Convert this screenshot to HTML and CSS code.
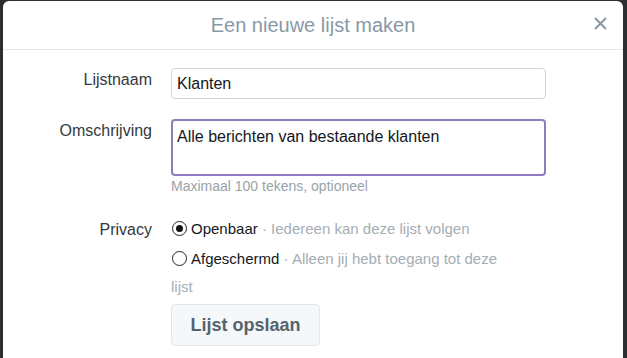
FILE: index.html
```html
<!DOCTYPE html>
<html lang="nl">
<head>
<meta charset="utf-8">
<title>Een nieuwe lijst maken</title>
<link rel="stylesheet" href="styles.css">
</head>
<body>
<div class="modal">
  <div class="modal-header">
    <h3 class="modal-title">Een nieuwe lijst maken</h3>
    <button class="close" aria-label="Sluiten">
      <svg width="13" height="13" viewBox="0 0 13 13"><path d="M1 1 L12 12 M12 1 L1 12" stroke="#8899a6" stroke-width="2" fill="none"/></svg>
    </button>
  </div>
  <form class="modal-body">
    <label class="label label-name">Lijstnaam</label>
    <div class="field"><div class="input">Klanten</div></div>

    <label class="label label-desc">Omschrijving</label>
    <div class="field">
      <div class="textarea">Alle berichten van bestaande klanten</div>
      <p class="hint">Maximaal 100 tekens, optioneel</p>
    </div>

    <label class="label label-privacy">Privacy</label>
    <div class="field options">
      <p class="option"><span class="radio checked"></span><span class="opt-name">Openbaar</span> <span class="muted">· Iedereen kan deze lijst volgen</span></p>
      <p class="option"><span class="radio"></span><span class="opt-name">Afgeschermd</span> <span class="muted">· Alleen jij hebt toegang tot deze</span> <span class="muted">lijst</span></p>
      <div class="actions"><button type="button" class="btn">Lijst opslaan</button></div>
    </div>
  </form>
</div>
</body>
</html>
```
FILE: styles.css
```css
html, body {
  margin: 0;
  padding: 0;
  height: 100%;
}
body {
  background: #2b2e30;
  font-family: "Liberation Sans", Arial, sans-serif;
  overflow: hidden;
}
.modal {
  box-sizing: border-box;
  margin: 1px 4px 0 3px;
  height: 357px;
  background: #fff;
  border-radius: 6px 6px 0 0;
}
.modal-header {
  position: relative;
  height: 48px;
  border-bottom: 1px solid #e1e8ed;
  display: flex;
  align-items: center;
  justify-content: center;
}
.modal-title {
  margin: 0;
  font-weight: normal;
  font-size: 20px;
  color: #8899a6;
  line-height: 24px;
}
.close {
  position: absolute;
  right: 16px;
  top: 16px;
  width: 13px;
  height: 13px;
  padding: 0;
  border: 0;
  background: none;
  display: block;
}
.close svg { display: block; }
.modal-body {
  display: grid;
  grid-template-columns: 149px 375px;
  column-gap: 19px;
  padding-top: 18px;
  margin: 0;
  color: #292f33;
}
.label {
  text-align: right;
  font-size: 16px;
  line-height: 20px;
  color: #333a40;
}
.label-name { padding-top: 2px; }
.label-desc { padding-top: 2px; margin-top: 20px; }
.label-privacy { margin-top: 25px; }
.field { min-width: 0; }
.input {
  box-sizing: border-box;
  height: 31px;
  border: 1px solid #ccd6dd;
  border-radius: 4px;
  padding: 5px 5px 0;
  font-size: 16px;
  line-height: 20px;
  color: #14171a;
}
.textarea {
  box-sizing: border-box;
  margin-top: 20px;
  height: 57px;
  border: 2px solid #8f7bbd;
  border-radius: 4px;
  padding: 6px 4px 0;
  font-size: 16px;
  line-height: 20px;
  color: #14171a;
}
.hint {
  margin: 1px 0 0;
  font-size: 14px;
  line-height: 18px;
  color: #99a3aa;
}
.options {
  padding-top: 20px;
  width: 335px;
  font-size: 15px;
  color: #14171a;
}
.option {
  margin: 0;
  line-height: 28px;
}
.option + .option { margin-top: 2px; }
.radio {
  display: inline-block;
  box-sizing: border-box;
  width: 15px;
  height: 15px;
  border: 1px solid #222;
  border-radius: 50%;
  vertical-align: -2px;
  margin: 0 4px 0 1px;
  position: relative;
  background: #fff;
}
.radio.checked::after {
  content: "";
  position: absolute;
  left: 3px;
  top: 3px;
  width: 7px;
  height: 7px;
  border-radius: 50%;
  background: #111;
}
.muted { color: #a4aeb5; }
.actions { margin-top: 3px; }
.btn {
  box-sizing: border-box;
  width: 149px;
  height: 42px;
  border: 1px solid #e1e8ed;
  border-radius: 4px;
  background: #f5f8fa;
  font-family: "Liberation Sans", Arial, sans-serif;
  font-weight: bold;
  font-size: 18px;
  color: #56636d;
  padding: 0;
}
```
